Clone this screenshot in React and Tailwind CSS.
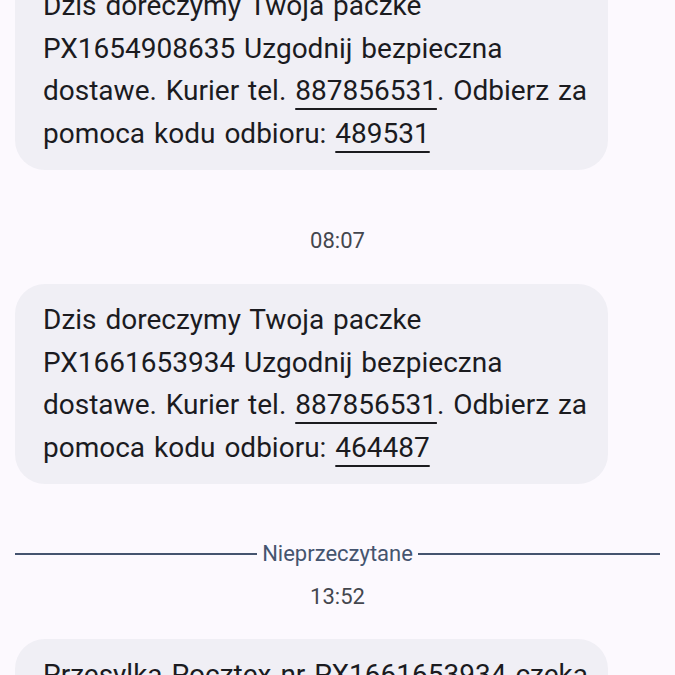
const font = { fontFamily: 'Roboto, "Noto Sans", sans-serif' };

const Num = ({ children }) => (
  <span className="underline decoration-2 underline-offset-[8px]">{children}</span>
);

const Bubble = ({ children, className = '' }) => (
  <div className={`w-[593px] rounded-[30px] bg-[#f0eff5] pl-[28px] pr-[12px] py-[15px] text-[28px] leading-[42.5px] text-[#1b1b1f] [word-spacing:2px] ${className}`}>
    {children}
  </div>
);

const Stamp = ({ children }) => (
  <div className="text-center text-[22px] leading-[28px] text-[#44474e]">{children}</div>
);

export default function App() {
  return (
    <div className="h-[675px] overflow-hidden bg-[#fcf9fe]" style={font}>
      <div className="flex flex-col px-[15px]">
        <Bubble className="-mt-[30px]">
          Dzis doreczymy Twoja paczke PX1654908635 Uzgodnij bezpieczna dostawe. Kurier tel. <Num>887856531</Num>. Odbierz za pomoca kodu odbioru: <Num>489531</Num>
        </Bubble>
        <div className="mt-[57px] mb-[29px]">
          <Stamp>08:07</Stamp>
        </div>
        <Bubble>
          Dzis doreczymy Twoja paczke PX1661653934 Uzgodnij bezpieczna dostawe. Kurier tel. <Num>887856531</Num>. Odbierz za pomoca kodu odbioru: <Num>464487</Num>
        </Bubble>
        <div className="mt-[56px] flex items-center gap-[5px]">
          <div className="h-[2px] flex-1 bg-[#45546f]" />
          <span className="text-[22px] leading-[28px] text-[#45546f]">Nieprzeczytane</span>
          <div className="h-[2px] flex-1 bg-[#45546f]" />
        </div>
        <div className="mt-[15px] mb-[28px]">
          <Stamp>13:52</Stamp>
        </div>
        <Bubble>
          Przesylka Pocztex nr PX1661653934 czeka na odbior w punkcie. Kod odbioru: <Num>464487</Num>
        </Bubble>
      </div>
    </div>
  );
}
